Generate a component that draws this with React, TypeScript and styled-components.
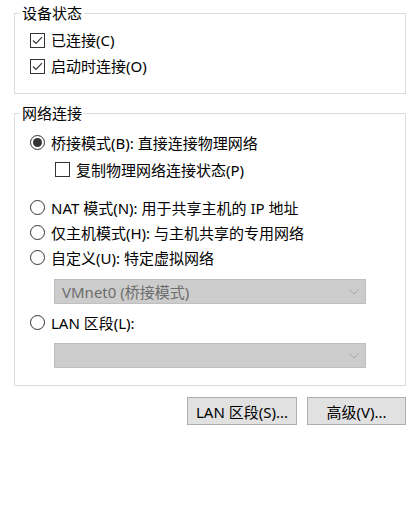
import styled, { createGlobalStyle } from "styled-components";

const GlobalStyle = createGlobalStyle`
  html, body {
    margin: 0;
    padding: 0;
    background: #ffffff;
  }
  body {
    font-family: "Noto Sans", "Noto Sans CJK SC", sans-serif;
    font-size: 15px;
    color: #000000;
  }
`;

const Page = styled.div`
  padding: 3px 13px 0 14px;
  display: flex;
  flex-direction: column;
`;

const Group = styled.fieldset<{ $gapTop?: number }>`
  margin: ${(p) => p.$gapTop ?? 0}px 0 0 0;
  padding: 0;
  border: 1px solid #dcdcdc;
  min-inline-size: 0;

  legend {
    margin-left: 5px;
    padding: 0 2px;
    font-size: 15px;
    line-height: 20px;
  }
`;

const GroupBody = styled.div<{ $top: number; $bottom: number }>`
  display: flex;
  flex-direction: column;
  padding: ${(p) => p.$top}px 0 ${(p) => p.$bottom}px 15px;
`;

const Row = styled.label<{ $h?: number; $indent?: number; $mt?: number }>`
  display: flex;
  align-items: center;
  gap: 6px;
  height: ${(p) => p.$h ?? 25}px;
  margin-left: ${(p) => p.$indent ?? 0}px;
  margin-top: ${(p) => p.$mt ?? 0}px;
  line-height: 20px;
  white-space: nowrap;
`;

const Box = styled.span`
  box-sizing: border-box;
  width: 15px;
  height: 15px;
  border: 1px solid #333333;
  background: #ffffff;
  display: flex;
  align-items: center;
  justify-content: center;
  flex: none;
`;

const Circle = styled.span`
  box-sizing: border-box;
  width: 15px;
  height: 15px;
  border: 1px solid #333333;
  border-radius: 50%;
  background: #ffffff;
  display: flex;
  align-items: center;
  justify-content: center;
  flex: none;
`;

const Dot = styled.span`
  width: 9px;
  height: 9px;
  border-radius: 50%;
  background: #333333;
`;

const Combo = styled.div<{ $mt: number }>`
  box-sizing: border-box;
  width: 312px;
  height: 25px;
  margin: ${(p) => p.$mt}px 0 0 24px;
  padding: 0 6px 0 7px;
  background: #cccccc;
  border: 1px solid #bfbfbf;
  color: #6d6d6d;
  display: flex;
  align-items: center;
  justify-content: space-between;
  white-space: nowrap;
`;

const Buttons = styled.div`
  display: flex;
  justify-content: flex-end;
  gap: 10px;
  margin-top: 11px;
`;

const Button = styled.button<{ $w: number }>`
  box-sizing: border-box;
  width: ${(p) => p.$w}px;
  height: 28px;
  padding: 0;
  background: #e1e1e1;
  border: 1px solid #adadad;
  font-family: inherit;
  font-size: 15px;
  color: #000000;
`;

function Check({ checked, label, indent, mt, h }: { checked: boolean; label: string; indent?: number; mt?: number; h?: number }) {
  return (
    <Row $indent={indent} $mt={mt} $h={h}>
      <Box>
        {checked && (
          <svg width="11" height="9" viewBox="0 0 11 9">
            <path d="M1 4.5 L4 7.5 L10 1.2" fill="none" stroke="#333" strokeWidth="1.1" />
          </svg>
        )}
      </Box>
      <span>{label}</span>
    </Row>
  );
}

function Radio({ checked, label, mt }: { checked: boolean; label: string; mt?: number }) {
  return (
    <Row $mt={mt}>
      <Circle>{checked && <Dot />}</Circle>
      <span>{label}</span>
    </Row>
  );
}

function Chevron() {
  return (
    <svg width="10" height="6" viewBox="0 0 10 6">
      <path d="M0.5 0.5 L5 5 L9.5 0.5" fill="none" stroke="#a6a6a6" strokeWidth="1" />
    </svg>
  );
}

export default function App() {
  return (
    <>
      <GlobalStyle />
      <Page>
        <Group>
          <legend>设备状态</legend>
          <GroupBody $top={4} $bottom={14}>
            <Check checked label="已连接(C)" h={26} />
            <Check checked label="启动时连接(O)" h={26} />
          </GroupBody>
        </Group>
        <Group $gapTop={9}>
          <legend>网络连接</legend>
          <GroupBody $top={7} $bottom={17}>
            <Radio checked label="桥接模式(B): 直接连接物理网络" />
            <Check checked={false} label="复制物理网络连接状态(P)" indent={25} mt={2} />
            <Radio checked={false} label="NAT 模式(N): 用于共享主机的 IP 地址" mt={13} />
            <Radio checked={false} label="仅主机模式(H): 与主机共享的专用网络" />
            <Radio checked={false} label="自定义(U): 特定虚拟网络" />
            <Combo $mt={9}>
              <span>VMnet0 (桥接模式)</span>
              <Chevron />
            </Combo>
            <Radio checked={false} label="LAN 区段(L):" mt={6} />
            <Combo $mt={8}>
              <span />
              <Chevron />
            </Combo>
          </GroupBody>
        </Group>
        <Buttons>
          <Button $w={110}>LAN 区段(S)...</Button>
          <Button $w={99}>高级(V)...</Button>
        </Buttons>
      </Page>
    </>
  );
}
